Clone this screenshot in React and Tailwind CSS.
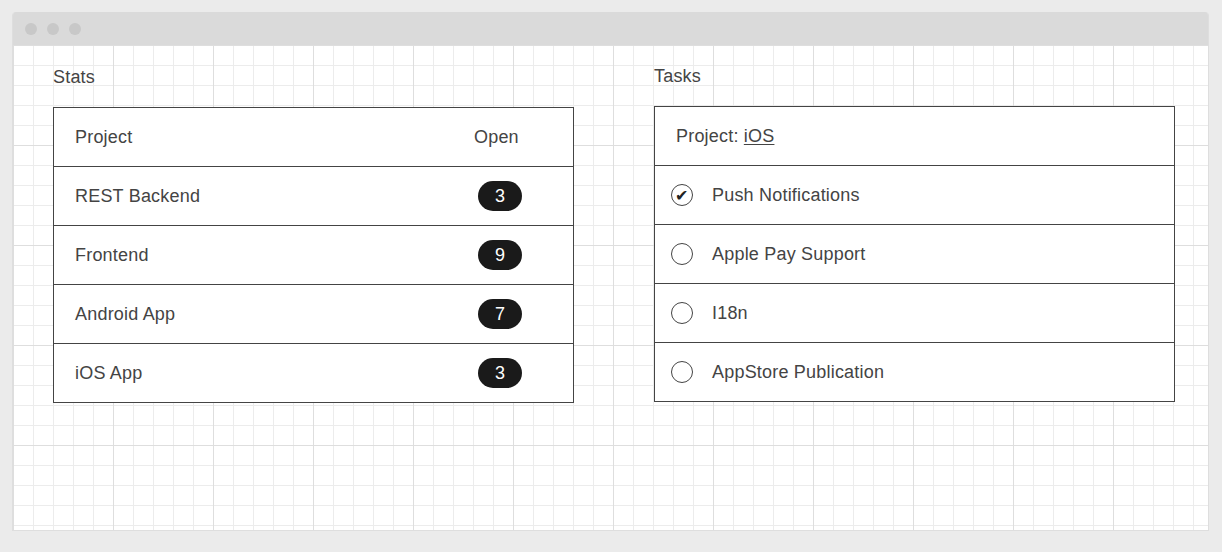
import React from "react";

const stats = [
  ["REST Backend", 3],
  ["Frontend", 9],
  ["Android App", 7],
  ["iOS App", 3],
];

const tasks = [
  ["Push Notifications", true],
  ["Apple Pay Support", false],
  ["I18n", false],
  ["AppStore Publication", false],
];

function Circle({ checked }) {
  return (
    <div className="w-[22px] h-[22px] rounded-full border border-[#444] bg-white flex items-center justify-center text-[16px] leading-none text-[#222]">
      {checked ? <span className="mt-[2px]">✔</span> : null}
    </div>
  );
}

export default function App() {
  return (
    <div
      className="w-full h-[552px] bg-[#ebebeb] p-3 text-[18px] tracking-[0.2px] text-[#444]"
      style={{ fontFamily: '"Liberation Sans", Arial, sans-serif' }}
    >
      <div className="w-[1197px] h-[519px] flex flex-col rounded-t-[4px] overflow-hidden border-x border-b border-[#dedede]">
        <div className="h-[33px] bg-[#dadada] flex items-center pl-[12px] gap-[10px]">
          <div className="w-[12px] h-[12px] rounded-full bg-[#c8c8c8]" />
          <div className="w-[12px] h-[12px] rounded-full bg-[#c8c8c8]" />
          <div className="w-[12px] h-[12px] rounded-full bg-[#c8c8c8]" />
        </div>
        <div className="flex-1 bg-white bg-[linear-gradient(to_right,#dedede_1px,transparent_1px),linear-gradient(to_bottom,#dedede_1px,transparent_1px),linear-gradient(to_right,#ececec_1px,transparent_1px),linear-gradient(to_bottom,#ececec_1px,transparent_1px)] bg-[size:100px_100px,100px_100px,20px_20px,20px_20px] flex pl-[40px] pt-[22px] gap-[80px]">
          <div className="w-[521px]">
            <div className="h-[21px] leading-[21px] mb-[19px]">Stats</div>
            <div className="border border-[#444] bg-white">
              <div className="h-[58px] flex items-center pl-[21px] pt-px">
                <div className="flex-1">Project</div>
                <div className="w-[52px] mr-[47px]">Open</div>
              </div>
              {stats.map(([name, n]) => (
                <div key={name} className="h-[59px] border-t border-[#444] flex items-center pl-[21px]">
                  <div className="flex-1">{name}</div>
                  <div className="w-[52px] mr-[47px] flex justify-center">
                    <div className="w-[44px] h-[30px] rounded-full bg-[#1a1a1a] text-white flex items-center justify-center">
                      {n}
                    </div>
                  </div>
                </div>
              ))}
            </div>
          </div>
          <div className="w-[521px] -mt-px">
            <div className="h-[21px] leading-[21px] mb-[19px]">Tasks</div>
            <div className="border border-[#444] bg-white">
              <div className="h-[58px] flex items-center pl-[21px] pt-px">
                <span>
                  Project: <span className="underline underline-offset-2">iOS</span>
                </span>
              </div>
              {tasks.map(([name, done]) => (
                <div key={name} className="h-[59px] border-t border-[#444] flex items-center pl-[16px] gap-[19px]">
                  <Circle checked={done} />
                  <div>{name}</div>
                </div>
              ))}
            </div>
          </div>
        </div>
      </div>
    </div>
  );
}
